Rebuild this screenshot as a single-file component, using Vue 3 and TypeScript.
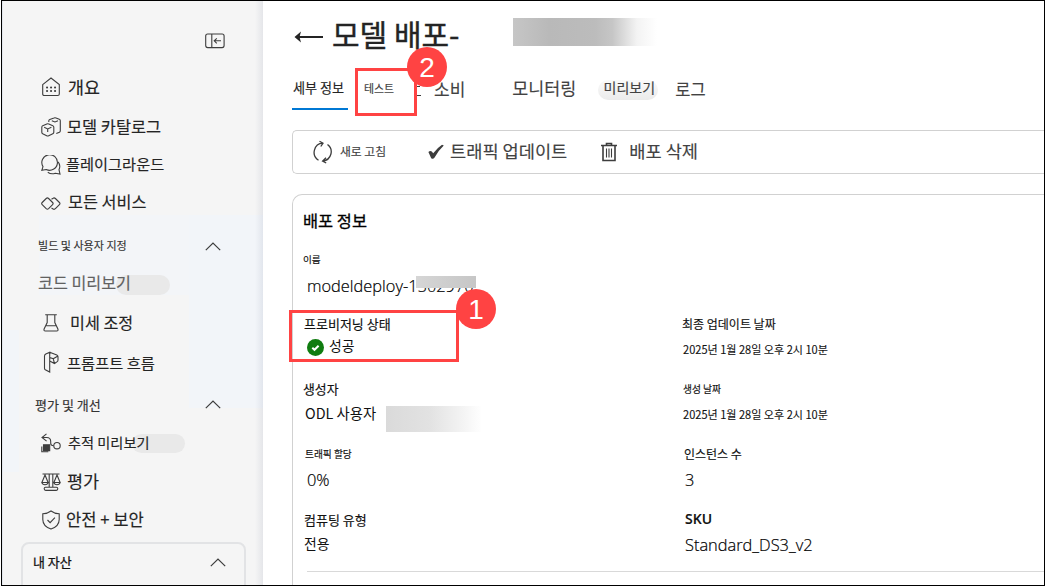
<script setup lang="ts">
interface NavItem {
  id: string
  label: string
  kind: 'link' | 'group' | 'plain'
  icon?: string
  pill?: boolean
}

interface Field {
  id: string
  label: string
  value: string
}

const nav: NavItem[] = [
  { id: 'overview', label: '개요', kind: 'link', icon: 'home' },
  { id: 'catalog', label: '모델 카탈로그', kind: 'link', icon: 'cubes' },
  { id: 'playground', label: '플레이그라운드', kind: 'link', icon: 'chat' },
  { id: 'services', label: '모든 서비스', kind: 'link', icon: 'services' },
  { id: 'build', label: '빌드 및 사용자 지정', kind: 'group' },
  { id: 'code', label: '코드 미리보기', kind: 'plain', pill: true },
  { id: 'tuning', label: '미세 조정', kind: 'link', icon: 'flask' },
  { id: 'flow', label: '프롬프트 흐름', kind: 'link', icon: 'flow' },
  { id: 'assess', label: '평가 및 개선', kind: 'group' },
  { id: 'tracing', label: '추적 미리보기', kind: 'link', icon: 'trace', pill: true },
  { id: 'eval', label: '평가', kind: 'link', icon: 'scale' },
  { id: 'safety', label: '안전 + 보안', kind: 'link', icon: 'shield' },
]

const leftFields: Field[] = [
  { id: 'status', label: '프로비저닝 상태', value: '성공' },
  { id: 'creator', label: '생성자', value: 'ODL 사용자' },
  { id: 'traffic', label: '트래픽 할당', value: '0%' },
  { id: 'compute', label: '컴퓨팅 유형', value: '전용' },
]

const rightFields: Field[] = [
  { id: 'updated', label: '최종 업데이트 날짜', value: '2025년 1월 28일 오후 2시 10분' },
  { id: 'created', label: '생성 날짜', value: '2025년 1월 28일 오후 2시 10분' },
  { id: 'instances', label: '인스턴스 수', value: '3' },
  { id: 'sku', label: 'SKU', value: 'Standard_DS3_v2' },
]
</script>

<template>
  <div class="frame">
    <aside class="sidebar">
      <div class="collapse">
        <svg width="20" height="16" viewBox="0 0 20 16">
          <rect x="0.7" y="1" width="18.4" height="13.6" rx="2" />
          <path d="M6.8 1v13.6M16 7.8H9.3M11.8 5.3 9.2 7.8l2.6 2.5" />
        </svg>
      </div>
      <nav class="nav">
        <div v-for="item in nav" :key="item.id" class="row" :class="[item.kind, item.id]">
          <svg v-if="item.icon === 'home'" class="icon" viewBox="0 0 20 20">
            <path d="M1.7 7.6 10 1l8.3 6.6v9.3q0 1.6-1.6 1.6H3.3q-1.6 0-1.6-1.6z" />
            <path class="dots" d="M6 10.5h.1M10 10.5h.1M14 10.5h.1M6 14h.1M10 14h.1M14 14h.1" />
          </svg>
          <svg v-else-if="item.icon === 'cubes'" class="icon" viewBox="0 0 20 20">
            <path d="M.8 10.200Q.8 9.200 1.700 8.800L5.800 7q1-.4 2 0l4 1.800q1 .4 1 1.400v5q0 1-1 1.500l-4.100 2q-1 .5-2 0l-4-1.900q-.9-.5-.9-1.500zM3.200 10.300l3.500 1.600 3.700-1.600M6.700 11.900V15" />
            <path d="M7.800 5V3.800q0-1 1-1.400L13 .9q1-.4 2 0l3.300 1.400q1 .4 1 1.400v10q0 1-.9 1.500L15.300 16.500M10.800 3.700 14 5l3-1.300" />
          </svg>
          <svg v-else-if="item.icon === 'chat'" class="icon" viewBox="0 0 20 20">
            <path d="M.8 15.300 2 11.600A7.800 7.800 0 1 1 5.200 14.500z" />
            <path d="M6.800 17.200a7.700 7.700 0 0 0 7.500 1l4.700.8-1-4.300a7.600 7.600 0 0 0-.9-7.900" />
          </svg>
          <svg v-else-if="item.icon === 'services'" class="icon" viewBox="0 0 20 20">
            <path d="M5.200 5.500Q6.400 4.400 7.600 5.500l4 4q1.100 1.100 0 2.200l-4 4q-1.200 1.100-2.400 0l-4-4q-1.100-1.100 0-2.200z" />
            <path d="M10.500 6.200l1.600-1q1.200-.8 2.300.3l4 4q1.100 1.100 0 2.200l-4 4q-1.100 1.100-2.300.3l-1.600-1" />
          </svg>
          <svg v-else-if="item.icon === 'flask'" class="icon" viewBox="0 0 20 20">
            <path d="M4.200 1.800h11.600M6.200 1.800v7.800L3.100 16q-.6 2 1.200 2h11.400q1.800 0 1.200-2l-3.100-6.400V1.800M5.200 12.700h9.600" />
          </svg>
          <svg v-else-if="item.icon === 'flow'" class="icon tall" viewBox="0 0 20 22">
            <path d="M8.700 1.200 4.800 3Q3.500 3.700 3.500 5v12.200q0 1 .8 1.500l4.400 2.300zM8.700 1.200 15.800 4q1.200.6 1.200 1.800V9q0 1-.8 1.600L13.500 12.500 8.700 10M8.700 6.500l3.500 1.200 1.300 4.800M12.200 7.700 17 4.900" />
          </svg>
          <svg v-else-if="item.icon === 'trace'" class="icon" viewBox="0 0 20 20">
            <path d="M5.500.8 1 4.500l4.600 3.600M1.200 4.500h4.500q4 0 4 4v1.700q0 2.500 3 2.500" />
            <circle cx="16" cy="12.700" r="3.200" />
            <path class="solid" d="M2.500 11.800h6.200v5.800H2.500z" />
            <path d="M.8 13.500v5.300h6.500" />
          </svg>
          <svg v-else-if="item.icon === 'scale'" class="icon" viewBox="0 0 20 20">
            <path d="M1.500 2h17M8.200 2v13M11.800 2v13M4 3 .9 10.500h6.200zM16 3l-3.100 7.500h6.200zM.9 10.500q.4 2.200 3.100 2.200t3.100-2.200M12.900 10.500q.4 2.200 3.100 2.200t3.100-2.200M4.700 15.300h10.600q1.500 0 1.500 1.500T15.300 18.400H4.700q-1.500 0-1.500-1.600t1.500-1.500z" />
          </svg>
          <svg v-else-if="item.icon === 'shield'" class="icon" viewBox="0 0 20 20">
            <path d="M10 1q3.500 2.600 8.200 2.800v5.700q0 6.700-8.200 9.600-8.200-2.900-8.200-9.600V3.800Q6.500 3.600 10 1zM6.500 10l2.600 2.600 4.800-4.900" />
          </svg>
          <span class="label">{{ item.label }}</span>
          <i v-if="item.pill" class="pill"></i>
          <svg v-if="item.kind === 'group'" class="chevron" viewBox="0 0 16 9"><path d="M.8 8.200 8 1l7.200 7.200" /></svg>
        </div>
      </nav>
      <section class="assets">
        <span class="label">내 자산</span>
        <svg class="chevron" viewBox="0 0 16 9"><path d="M.8 8.200 8 1l7.200 7.200" /></svg>
      </section>
    </aside>

    <main class="main">
      <header class="title">
        <svg width="30" height="14" viewBox="0 0 30 14"><path class="shaft" d="M4 7h25" /><path class="head" d="M.5 7 7 1.500 5.500 7 7 12.500z" /></svg>
        <h1>모델 배포-</h1>
        <i class="smudge"></i>
      </header>

      <div class="tabs">
        <span class="tab active">세부 정보</span>
        <span class="tab test">테스트</span>
        <svg class="sliver" viewBox="0 0 4 12"><path d="M0 1.500h3M0 10.500h4" /></svg>
        <span class="tab consume">소비</span>
        <span class="tab monitor">모니터링</span>
        <span class="tab preview">미리보기</span>
        <span class="tab logs">로그</span>
      </div>

      <div class="toolbar">
        <svg class="refresh" viewBox="0 0 20 24">
          <path d="M5.500 20.200A9.200 9.200 0 0 1 9.800 3.200M14.500 4.500A9.200 9.200 0 0 1 10 21M6.500 1.200 10 3.200 7.800 6.500M13 17.800 9.600 21l3.600 2" />
        </svg>
        <span class="tool reload">새로 고침</span>
        <svg class="check" viewBox="0 0 16 16"><path d="M.4 8Q2.200 6 3.800 7.600l1.400 1.700Q9.500 3.600 14 .7l1.800.9Q10.500 6.500 6.600 13.400q-1.800 2.600-3.500.6z" /></svg>
        <span class="tool update">트래픽 업데이트</span>
        <svg class="trash" viewBox="0 0 16 20">
          <path d="M0 3.500h16M5.500 3.500v-2h5v2M2 3.500v15h12v-15" />
          <path class="thin" d="M5.500 6.500v9M8 6.500v9M10.500 6.500v9" />
        </svg>
        <span class="tool delete">배포 삭제</span>
      </div>

      <section class="card">
        <h2>배포 정보</h2>
        <div class="field name">
          <span class="key">이름</span>
          <span class="value">modeldeploy-1502970<i class="mask"></i></span>
        </div>
        <div class="columns">
          <div class="column">
            <div v-for="field in leftFields" :key="field.id" class="field" :class="field.id">
              <span class="key">{{ field.label }}</span>
              <span class="value">
                <svg v-if="field.id === 'status'" class="ok" viewBox="0 0 17 17"><circle cx="8.500" cy="8.500" r="8.500" /><path d="m5.300 8.700 2.200 2.100 4.100-4" /></svg>
                <span>{{ field.value }}</span>
                <i v-if="field.id === 'creator'" class="mask"></i>
              </span>
            </div>
          </div>
          <div class="column">
            <div v-for="field in rightFields" :key="field.id" class="field" :class="field.id">
              <span class="key">{{ field.label }}</span>
              <span class="value">{{ field.value }}</span>
            </div>
          </div>
        </div>
        <hr />
      </section>
    </main>

    <div class="callout box-test"></div>
    <div class="callout box-status"></div>
    <div class="badge two">2</div>
    <div class="badge one">1</div>
    <div class="outline"></div>
  </div>
</template>

<style>
body {
  margin: 0;
  overflow: hidden;
  background: #fff;
}
</style>

<style scoped>
.frame {
  position: relative;
  display: flex;
  box-sizing: border-box;
  width: 1045px;
  height: 586px;
  overflow: hidden;
  padding-left: 2px;
  background: #fff;
  color: #242424;
  font-family: 'Noto Sans CJK KR', 'Noto Sans', sans-serif;
  line-height: 1;
  white-space: nowrap;
}
.outline {
  position: absolute;
  inset: 0 0 0 1px;
  border: 1px solid #000;
}
svg {
  flex: none;
  fill: none;
  stroke: #3d3d3d;
  stroke-width: 1.1;
}
.sidebar {
  display: flex;
  flex: none;
  flex-direction: column;
  box-sizing: border-box;
  width: 261px;
  height: 586px;
  border-left: 1px solid #e3e7ed;
  background:
    linear-gradient(90deg, transparent 252px, rgba(110, 120, 150, 0.12)),
    linear-gradient(#f2f5f9, #f2f5f9) 186px 215px / 80px 193px no-repeat,
    linear-gradient(#f3f5f8, #f3f5f8) 36px 215px / 150px 80px no-repeat,
    linear-gradient(#f2f5f9, #f2f5f9) 0 330px / 16px 142px no-repeat,
    #f5f5f5;
}
.collapse {
  display: flex;
  flex: none;
  align-items: center;
  height: 67px;
  padding: 15px 0 0 202px;
  box-sizing: border-box;
}
.nav {
  display: grid;
  flex: none;
  grid-template-rows: 40px 38px 39px 38px 48px 27px 51px 30px 53px 24px 53px 23px;
}
.row {
  display: flex;
  align-items: center;
  padding-left: 38px;
}
.icon {
  width: 20px;
  height: 20px;
}
.icon.tall {
  height: 22px;
  margin-top: -2px;
}
.dots {
  stroke-width: 2;
  stroke-linecap: round;
}
.solid {
  fill: #3d3d3d;
}
.chevron {
  width: 16px;
  height: 9px;
  stroke-width: 1.2;
}
.group {
  justify-content: space-between;
  padding-right: 42px;
}
.overview .label { margin: -1px 0 0 7px; font-size: 17.4px; }
.catalog .label { margin-left: 6px; font-size: 16.4px; }
.catalog .icon { margin-top: 2px; }
.playground .label { margin: -2px 0 0 5px; font-size: 15.25px; }
.services .label { margin: -3px 0 0 7px; font-size: 16.3px; }
.build { padding-left: 35px; }
.build .label { color: #333; font-size: 11.05px; }
.code { padding-left: 35px; }
.code .label { z-index: 1; margin-top: -2px; color: #616161; font-size: 16.2px; }
.tuning .label { margin: -1px 0 0 9px; font-size: 16.2px; }
.flow .label { margin-left: 6px; font-size: 15.3px; }
.assess { padding-left: 32px; }
.assess .label { color: #333; font-size: 13.05px; }
.tracing .label { z-index: 1; margin: -1px 0 0 7px; font-size: 14.2px; }
.eval .label { margin: -1px 0 0 6px; font-size: 17.5px; }
.safety .label { margin-left: 5px; font-size: 16.6px; }
.label {
  -webkit-text-stroke: 0.15px currentColor;
}
.pill {
  width: 54px;
  height: 20px;
  margin: 3px 0 0 -15px;
  border-radius: 10px;
  background: #e9e9e9;
}
.tracing .pill {
  width: 53px;
  height: 19px;
  margin: 0 0 0 -18px;
}
.assets {
  display: flex;
  flex: none;
  align-items: center;
  justify-content: space-between;
  box-sizing: border-box;
  width: 225px;
  height: 56px;
  margin: 11px 0 0 18px;
  padding: 0 18px 16px 10px;
  border: 2px solid #e2e3e5;
  border-radius: 8px;
}
.assets .label {
  margin-top: -1px;
  color: #111;
  font-size: 13px;
  -webkit-text-stroke-width: 0.25px;
}
.main {
  flex: 1;
  box-sizing: border-box;
  min-width: 0;
  padding-left: 29px;
  border-radius: 10px 0 0 0;
  background: #fff;
}
.title {
  display: flex;
  align-items: center;
  height: 64px;
  padding: 8px 0 0 2px;
  box-sizing: border-box;
}
.title .shaft { stroke: #242424; stroke-width: 2; }
.title .head { fill: #242424; stroke: none; }
.title svg { margin-top: 1px; }
h1 {
  margin: -7px 0 0 8px;
  font-size: 30px;
  font-weight: 400;
  -webkit-text-stroke: 0.4px currentColor;
}
.smudge {
  width: 144px;
  height: 28px;
  margin: -8px 0 0 53px;
  background: linear-gradient(90deg, #c6c6c6, #b9b9b9 25%, #bcbcbc 57%, #c6c6c6 69%, #f3f3f3 86%, #fff);
}
.tabs {
  display: flex;
  align-items: center;
  height: 46px;
  margin-bottom: 20px;
}
.tab {
  margin-top: 2px;
  color: #424242;
  -webkit-text-stroke: 0.15px currentColor;
}
.tab.active {
  display: flex;
  align-items: center;
  box-sizing: border-box;
  width: 56px;
  height: 46px;
  margin-top: 0;
  padding-left: 1px;
  padding-top: 3px;
  border-bottom: 2px solid #0078d4;
  color: #242424;
  font-size: 13.1px;
}
.tab.test { margin-left: 16px; font-size: 10.9px; }
.sliver { width: 4px; height: 12px; margin: 8px 0 0 23px; }
.tab.consume { margin-left: 13px; font-size: 17px; }
.tab.monitor { margin-left: 47px; font-size: 17.4px; }
.tab.preview {
  width: 58px;
  margin-top: 6px;
  margin-left: 22px;
  padding: 0 0 6px 2px;
  border-radius: 10px;
  background: linear-gradient(#fafafa, #ebebeb);
  font-size: 14px;
  text-align: center;
}
.tab.logs { margin-top: 4px; margin-left: 17px; font-size: 16.5px; }
.toolbar {
  display: flex;
  align-items: center;
  box-sizing: border-box;
  height: 44px;
  padding-left: 20px;
  border: 1px solid #d1d1d1;
  border-right: 0;
  border-radius: 5px 0 0 5px;
}
.tool { margin-top: -2px; color: #424242; -webkit-text-stroke: 0.15px currentColor; }
.refresh { width: 20px; height: 24px; stroke-width: 1.3; }
.reload { margin-left: 7px; font-size: 11.8px; }
.check { width: 16px; height: 16px; margin-left: 42px; fill: #3d3d3d; stroke: none; }
.update { margin-left: 6px; font-size: 17.6px; }
.trash { width: 16px; height: 20px; margin-left: 34px; stroke-width: 1.6; }
.trash .thin { stroke-width: 1.1; }
.delete { margin-left: 12px; font-size: 17.6px; }
.card {
  box-sizing: border-box;
  height: 400px;
  margin-top: 20px;
  border: 1px solid #d1d1d1;
  border-right: 0;
  border-radius: 10px 0 0 0;
  color: #111;
}
h2 {
  height: 51px;
  margin: 0 0 0 10px;
  color: #000;
  font-size: 16.4px;
  font-weight: 400;
  line-height: 50px;
  -webkit-text-stroke: 0.3px currentColor;
}
.columns {
  display: grid;
  grid-template-columns: 379px 1fr;
  margin-left: 10px;
}
.field {
  display: grid;
  grid-template-rows: 24px 28px;
  align-items: center;
  height: 65px;
  align-content: start;
}
.field.name { height: 66px; margin-left: 10px; grid-template-rows: 26px 28px; }
.value {
  display: flex;
  align-items: center;
}
.key { font-size: 12.9px; -webkit-text-stroke: 0.15px currentColor; }
.name .key { padding-top: 1px; font-size: 9.6px; }
.name .value {
  position: relative;
  padding-left: 4px;
  color: #000;
  font-family: 'Open Sans', 'Noto Sans', sans-serif;
  font-size: 16.4px;
  font-weight: 300;
  -webkit-text-stroke: 0.2px currentColor;
}
.name .mask {
  position: absolute;
  top: -2px;
  left: 113px;
  width: 60px;
  height: 12px;
  background: linear-gradient(90deg, #d6d6d6, #c6c6c6);
}
.status .key { padding: 0 0 1px 1px; font-size: 13px; }
.status .value { padding: 0 0 6px 4px; font-size: 13.9px; }
.status .value span { margin-top: -2px; }
.ok { width: 17px; height: 17px; margin-right: 5px; stroke: #fff; stroke-width: 2; }
.ok circle { fill: #107c10; stroke: none; }
.creator .value { padding: 0 0 3px 2px; font-size: 14.35px; }
.creator .mask {
  width: 96px;
  height: 26px;
  margin: 10px 0 -1px 10px;
  background: linear-gradient(90deg, #dadada, #e2e2e2 45%, #f1f1f1 75%, #fff);
}
.traffic .key { padding: 1px 0 0 2px; font-size: 9.7px; }
.traffic .value, .instances .value, .sku .value {
  color: #000;
  font-family: 'Open Sans', 'Noto Sans', sans-serif;
  font-size: 16.4px;
  font-weight: 300;
  -webkit-text-stroke: 0.2px currentColor;
}
.traffic .value { padding-left: 4px; }
.compute .key { padding-left: 1px; font-size: 13px; }
.compute .value { padding: 0 0 2px 1px; font-size: 13.9px; }
.updated .key { font-size: 12px; }
.updated .value, .created .value { padding: 0 0 0 1px; font-size: 11.05px; -webkit-text-stroke: 0.1px currentColor; }
.created .key { padding: 2px 0 0 1px; font-size: 9.75px; }
.instances .key { padding-left: 2px; font-size: 12px; }
.instances .value { padding-left: 3px; }
.sku .key { padding-left: 3px; font-family: 'Open Sans', sans-serif; font-size: 14px; font-weight: 600; }
.sku .value { padding-left: 3px; }
hr {
  margin: -1px 0 0 14px;
  border: 0;
  border-top: 1px solid #d9d9d9;
}
.callout {
  position: absolute;
  box-sizing: border-box;
  border: 3px solid #ff4343;
}
.box-test { top: 68px; left: 355px; width: 62px; height: 48px; }
.box-status { top: 310px; left: 289px; width: 170px; height: 52px; }
.badge {
  position: absolute;
  width: 40px;
  height: 40px;
  border-radius: 50%;
  background: #ff4343;
  color: #fff;
  font: 28px/41px 'Liberation Sans', sans-serif;
  text-align: center;
}
.two { top: 47px; left: 407px; }
.one { top: 289px; left: 456px; }
</style>
